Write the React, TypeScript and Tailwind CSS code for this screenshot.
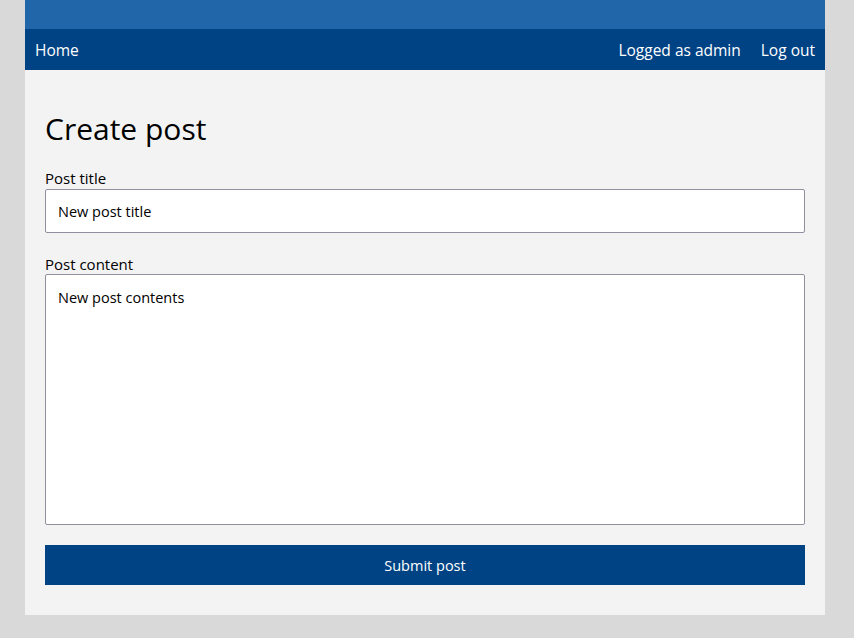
const App = () => {
  return (
    <div
      className="min-h-[638px] w-full bg-[#d9d9d9] text-black"
      style={{ fontFamily: '"Open Sans", "Noto Sans", sans-serif' }}
    >
      <div className="ml-[25px] w-[800px]">
        <div className="h-[29px] bg-[#2166a8]" />
        <nav className="flex h-[41px] items-center justify-between bg-[#004385] px-[10px] pt-[2px] text-[15.5px] text-white">
          <a>Home</a>
          <div className="flex items-center gap-[20px]">
            <span>Logged as admin</span>
            <a>Log out</a>
          </div>
        </nav>
        <main className="bg-[#f3f3f3] px-[20px] pt-[37px] pb-[30px]">
          <h1 className="mb-[16px] text-[30px] leading-[44px]">Create post</h1>
          <form className="flex flex-col">
            <label className="pt-[1px] text-[15px] leading-[21px]">Post title</label>
            <input
              className="mb-[20px] h-[44px] rounded-[2px] border border-[#8f8f9d] bg-white px-[12px] pt-[1px] text-[14.5px] outline-none"
              defaultValue="New post title"
            />
            <label className="pt-[1px] text-[15px] leading-[20px]">Post content</label>
            <textarea
              className="mb-[20px] h-[251px] resize-none rounded-[2px] border border-[#8f8f9d] bg-white px-[12px] pt-[12px] pb-[10px] text-[14.5px] leading-[22px] outline-none"
              defaultValue="New post contents"
            />
            <button
              type="button"
              className="h-[40px] bg-[#004385] pt-[2px] text-[14.5px] text-white"
            >
              Submit post
            </button>
          </form>
        </main>
      </div>
    </div>
  );
};

export default App;
